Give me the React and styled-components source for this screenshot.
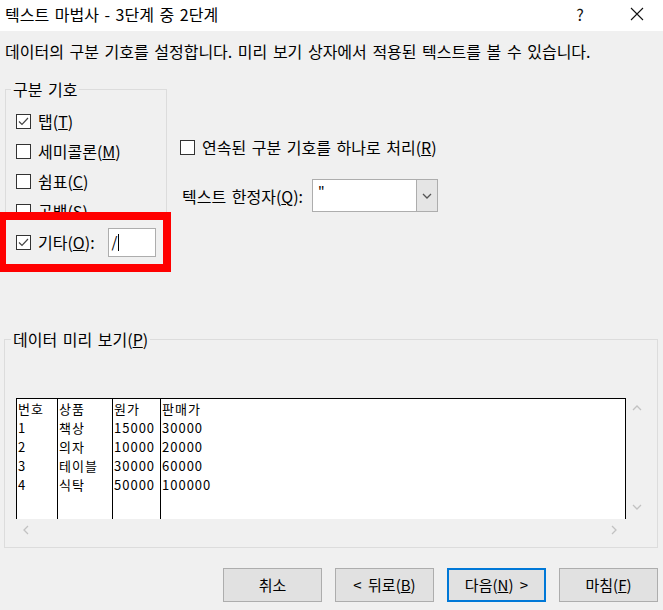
import styled, { createGlobalStyle } from 'styled-components';

const GlobalStyle = createGlobalStyle`
  html, body {
    margin: 0;
    padding: 0;
    background: #f0f0f0;
  }
  body {
    font-family: "Noto Sans CJK KR", "Noto Sans", sans-serif;
    font-size: 16px;
    color: #000;
  }
`;

const Window = styled.div`
  width: 663px;
  height: 610px;
  background: #f0f0f0;
  display: flex;
  flex-direction: column;
  overflow: hidden;
  word-spacing: 2px;
`;

const TitleBar = styled.div`
  height: 31px;
  flex: none;
  background: #fff;
  display: flex;
  align-items: center;
  padding: 0 3px 0 5px;
`;

const Title = styled.div`
  flex: 1;
  line-height: 20px;
  margin-top: -3px;
`;

const TitleButton = styled.div`
  width: ${(p) => p.$w}px;
  margin-right: ${(p) => p.$gap || 0}px;
  display: flex;
  justify-content: center;
  align-items: center;
  font-size: 16px;
  margin-top: -3px;
  color: #111;
`;

const Instruction = styled.div`
  height: 41px;
  flex: none;
  box-sizing: border-box;
  padding: 9px 5px 0;
  line-height: 22px;
`;

const TopArea = styled.div`
  position: relative;
  height: 257px;
  flex: none;
  display: flex;
  align-items: flex-start;
  padding-left: 5px;
`;

const Group = styled.fieldset`
  box-sizing: border-box;
  margin: 7px 0 0;
  padding: 7px 0 0 10px;
  border: 1px solid #dcdcdc;
  width: 162px;
  height: 187px;
  min-width: 0;
`;

const Legend = styled.legend`
  padding: 0 2px;
  margin-left: -5px;
  line-height: 20px;
`;

const CheckRow = styled.label`
  position: relative;
  z-index: ${(p) => (p.$front ? 2 : 0)};
  display: flex;
  align-items: center;
  gap: 7px;
  height: ${(p) => p.$h || 30}px;
  line-height: 20px;
  white-space: nowrap;
`;

const Box = styled.span`
  width: 15px;
  height: 15px;
  flex: none;
  box-sizing: border-box;
  border: 1px solid #333;
  background: #fff;
  display: flex;
  align-items: center;
  justify-content: center;
`;

const Highlight = styled.div`
  position: absolute;
  left: -2px;
  top: 140px;
  width: 173px;
  height: 60px;
  box-sizing: border-box;
  border: 8px solid #ff0000;
  background: #f0f0f0;
  z-index: 1;
`;

const SmallInput = styled.div`
  width: 48px;
  height: 29px;
  box-sizing: border-box;
  border: 1px solid #adadad;
  background: #fff;
  margin-left: 6px;
  display: flex;
  align-items: center;
  padding-left: 3px;
  font-size: 15px;
`;

const Caret = styled.span`
  width: 1px;
  height: 17px;
  background: #000;
  margin-left: 1px;
`;

const Options = styled.div`
  margin-left: 13px;
  padding-top: 65px;
  display: flex;
  flex-direction: column;
`;

const QualifierRow = styled.div`
  display: flex;
  align-items: center;
  margin-top: 22px;
`;

const QualifierLabel = styled.span`
  width: 130px;
  padding-left: 2px;
  line-height: 20px;
  margin-top: 1px;
  white-space: nowrap;
`;

const Combo = styled.div`
  width: 126px;
  height: 33px;
  box-sizing: border-box;
  border: 1px solid #adadad;
  background: #fff;
  display: flex;
`;

const ComboValue = styled.div`
  flex: 1;
  padding: 3px 0 0 5px;
  font-size: 14px;
  line-height: 16px;
`;

const ComboButton = styled.div`
  width: 20px;
  background: #e5e5e5;
  border-left: 1px solid #adadad;
  display: flex;
  align-items: center;
  justify-content: center;
`;

const Preview = styled.fieldset`
  box-sizing: border-box;
  margin: 0 0 0 4px;
  padding: 49px 0 7px 11px;
  border: 1px solid #dcdcdc;
  width: 654px;
  height: 219px;
  min-width: 0;
  display: grid;
  grid-template-columns: 610px 1fr;
  grid-template-rows: 121px 21px;
`;

const DataBox = styled.div`
  background: #fff;
  border: 1px solid #000;
  border-bottom: none;
  display: flex;
  font-size: 13px;
  letter-spacing: 1px;
  word-spacing: 0;
  line-height: 19px;
`;

const Column = styled.div`
  box-sizing: border-box;
  width: ${(p) => (p.$w ? `${p.$w}px` : 'auto')};
  flex: ${(p) => (p.$w ? 'none' : 1)};
  border-left: ${(p) => (p.$first ? 'none' : '1px solid #000')};
  padding-left: 1px;
  white-space: pre;
`;

const VScroll = styled.div`
  display: flex;
  flex-direction: column;
  justify-content: space-between;
  align-items: flex-start;
  padding: 6px 0 8px 6px;
`;

const HScroll = styled.div`
  display: flex;
  justify-content: space-between;
  align-items: center;
  padding: 0 8px 0 6px;
`;

const ButtonRow = styled.div`
  display: flex;
  justify-content: flex-end;
  gap: 13px;
  padding-right: 5px;
  margin-top: 20px;
`;

const Button = styled.div`
  width: 99px;
  height: 34px;
  box-sizing: border-box;
  border: ${(p) => (p.$default ? '2px solid #0078d7' : '1px solid #adadad')};
  background: #e1e1e1;
  display: flex;
  align-items: center;
  justify-content: center;
  line-height: 20px;
  word-spacing: 3px;
  font-size: 15px;
`;

function Check({ checked }) {
  return (
    <Box>
      {checked && (
        <svg width="11" height="11" viewBox="0 0 11 11">
          <polyline points="1,5.5 4,8.5 10,2" fill="none" stroke="#444" strokeWidth="1.2" />
        </svg>
      )}
    </Box>
  );
}

function Chevron({ dir, color = '#c2c2c2' }) {
  const pts = {
    up: '1,6 5,2 9,6',
    down: '1,2 5,6 9,2',
    left: '6,1 2,5 6,9',
    right: '2,1 6,5 2,9',
  }[dir];
  const vertical = dir === 'up' || dir === 'down';
  return (
    <svg width={vertical ? 10 : 8} height={vertical ? 8 : 10} viewBox={vertical ? '0 0 10 8' : '0 0 8 10'}>
      <polyline points={pts} fill="none" stroke={color} strokeWidth="1.3" />
    </svg>
  );
}

const columns = [
  { w: 40, first: true, lines: ['번호', '1', '2', '3', '4'] },
  { w: 55, lines: ['상품', '책상', '의자', '테이블', '식탁'] },
  { w: 48, lines: ['원가', '15000', '10000', '30000', '50000'] },
  { lines: ['판매가', '30000', '20000', '60000', '100000'] },
];

export default function App() {
  return (
    <Window>
      <GlobalStyle />
      <TitleBar>
        <Title>텍스트 마법사 - 3단계 중 2단계</Title>
        <TitleButton $w={40} $gap={14}>?</TitleButton>
        <TitleButton $w={46}>
          <svg width="14" height="14" viewBox="0 0 14 14">
            <path d="M1 1 L13 13 M13 1 L1 13" stroke="#111" strokeWidth="1.1" />
          </svg>
        </TitleButton>
      </TitleBar>
      <Instruction>
        데이터의 구분 기호를 설정합니다. 미리 보기 상자에서 적용된 텍스트를 볼 수 있습니다.
      </Instruction>
      <TopArea>
        <Group>
          <Legend>구분 기호</Legend>
          <CheckRow>
            <Check checked />
            <span>탭(<u>T</u>)</span>
          </CheckRow>
          <CheckRow>
            <Check />
            <span>세미콜론(<u>M</u>)</span>
          </CheckRow>
          <CheckRow>
            <Check />
            <span>쉼표(<u>C</u>)</span>
          </CheckRow>
          <CheckRow>
            <Check />
            <span>공백(<u>S</u>)</span>
          </CheckRow>
          <CheckRow $front $h={32}>
            <Check checked />
            <span>기타(<u>O</u>):</span>
            <SmallInput>
              /<Caret />
            </SmallInput>
          </CheckRow>
        </Group>
        <Highlight />
        <Options>
          <CheckRow $h={20}>
            <Check />
            <span>연속된 구분 기호를 하나로 처리(<u>R</u>)</span>
          </CheckRow>
          <QualifierRow>
            <QualifierLabel>텍스트 한정자(<u>Q</u>):</QualifierLabel>
            <Combo>
              <ComboValue>"</ComboValue>
              <ComboButton>
                <Chevron dir="down" color="#555" />
              </ComboButton>
            </Combo>
          </QualifierRow>
        </Options>
      </TopArea>
      <Preview>
        <Legend>데이터 미리 보기(<u>P</u>)</Legend>
        <DataBox>
          {columns.map((c, i) => (
            <Column key={i} $w={c.w} $first={c.first}>
              {c.lines.join('\n')}
            </Column>
          ))}
        </DataBox>
        <VScroll>
          <Chevron dir="up" />
          <Chevron dir="down" />
        </VScroll>
        <HScroll>
          <Chevron dir="left" />
          <Chevron dir="right" />
        </HScroll>
        <div />
      </Preview>
      <ButtonRow>
        <Button>취소</Button>
        <Button>&lt; 뒤로(<u>B</u>)</Button>
        <Button $default>다음(<u>N</u>) &gt;</Button>
        <Button>마침(<u>F</u>)</Button>
      </ButtonRow>
    </Window>
  );
}
